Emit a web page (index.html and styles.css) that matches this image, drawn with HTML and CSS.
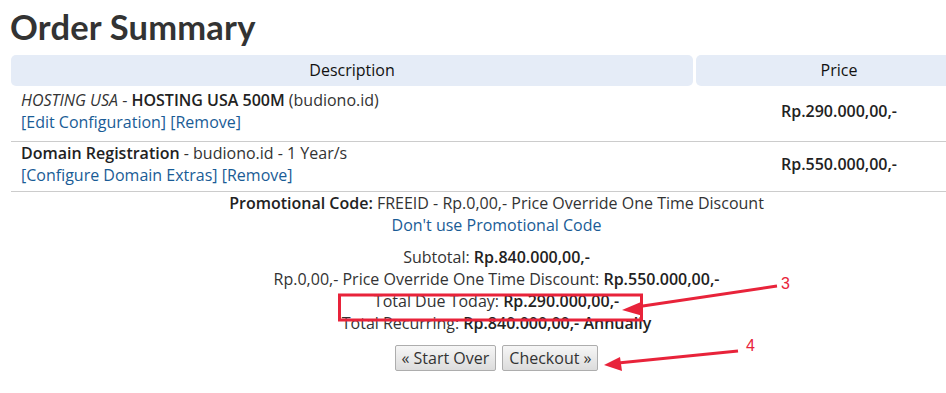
FILE: index.html
```
<!DOCTYPE html>
<html>
<head>
<meta charset="utf-8">
<link rel="stylesheet" href="styles.css">
</head>
<body>
<div class="page">
  <h1 class="title">Order Summary</h1>
  <div class="summary">
    <div class="head">
      <div class="hcell desc">Description</div>
      <div class="hcell price">Price</div>
    </div>
    <div class="row first">
      <div class="cell desc">
        <div><em>HOSTING USA</em> - <b>HOSTING USA 500M</b> (budiono.id)</div>
        <div><a>[Edit Configuration]</a> <a>[Remove]</a></div>
      </div>
      <div class="cell price"><b>Rp.290.000,00,-</b></div>
    </div>
    <div class="row second">
      <div class="cell desc">
        <div><b>Domain Registration</b> - budiono.id - 1 Year/s</div>
        <div><a>[Configure Domain Extras]</a> <a>[Remove]</a></div>
      </div>
      <div class="cell price"><b>Rp.550.000,00,-</b></div>
    </div>
  </div>
  <div class="centered">
    <div class="promo">
      <div><b>Promotional Code:</b> FREEID - Rp.0,00,- Price Override One Time Discount</div>
      <div><a>Don't use Promotional Code</a></div>
    </div>
    <div class="totals">
      <div>Subtotal: <b>Rp.840.000,00,-</b></div>
      <div>Rp.0,00,- Price Override One Time Discount: <b>Rp.550.000,00,-</b></div>
      <div>Total Due Today: <b>Rp.290.000,00,-</b></div>
      <div>Total Recurring: <b>Rp.840.000,00,- Annually</b></div>
    </div>
    <div class="buttons">
      <button class="btn">« Start Over</button>
      <button class="btn">Checkout »</button>
    </div>
  </div>
  <svg class="marks" width="946" height="393" viewBox="0 0 946 393">
    <rect x="339.5" y="288" width="302" height="25" fill="none" stroke="#e8233a" stroke-width="3"/>
    <line x1="777" y1="279" x2="636" y2="300" stroke="#e8233a" stroke-width="3"/>
    <polygon points="622,303 641,295 643,309" fill="#e8233a"/>
    <text x="781" y="282" class="num">3</text>
    <line x1="738" y1="344" x2="618" y2="356" stroke="#e8233a" stroke-width="3"/>
    <polygon points="604,358 620,350 622,364" fill="#e8233a"/>
    <text x="746" y="344" class="num">4</text>
  </svg>
</div>
</body>
</html>
```
FILE: styles.css
```
html, body {
  margin: 0;
  padding: 0;
  overflow: hidden;
}
body {
  font-family: "Open Sans", "Liberation Sans", sans-serif;
  font-size: 16px;
  line-height: 22px;
  color: #333;
  background: #fff;
}
.page {
  position: relative;
  width: 982px;
  padding: 0 0 0 11px;
  box-sizing: border-box;
}
.title {
  font-family: "Lato", "Open Sans", sans-serif;
  font-weight: 700;
  font-size: 34.5px;
  line-height: 40px;
  margin: 7px 0 8px -1px;
  color: #333;
  letter-spacing: 0.2px;
}
.head {
  display: flex;
  gap: 3px;
}
.hcell {
  background: #e5ecf7;
  height: 31px;
  line-height: 31px;
  text-align: center;
  border-radius: 5px;
  color: #111;
}
.desc {
  flex: 1;
}
.price {
  width: 286px;
  flex: none;
  text-align: center;
}
.row {
  display: flex;
  border-bottom: 1px solid #ccc;
}
.row.first {
  padding: 3px 0 8px;
}
.row.second {
  padding: 0 0 5px;
}
.cell.desc {
  padding-left: 10px;
}
.cell.price {
  display: flex;
  align-items: center;
  justify-content: center;
}
b {
  font-weight: 600;
  color: #222;
}
a {
  color: #1a5c96;
}
.centered {
  text-align: center;
}
.totals {
  margin-top: 10px;
}
.buttons {
  margin-top: 11px;
  display: flex;
  justify-content: center;
  gap: 6px;
}
.btn {
  font-family: "Open Sans", "Liberation Sans", sans-serif;
  font-size: 16px;
  color: #333;
  height: 26px;
  padding: 0 6px;
  border: 1px solid #adadad;
  border-radius: 2px;
  background: linear-gradient(#f6f6f6, #dcdcdc);
}
.marks {
  position: absolute;
  left: 0;
  top: 0;
  pointer-events: none;
}
.num {
  font-family: "Liberation Sans", sans-serif;
  font-size: 16px;
  fill: #e8233a;
}
```
